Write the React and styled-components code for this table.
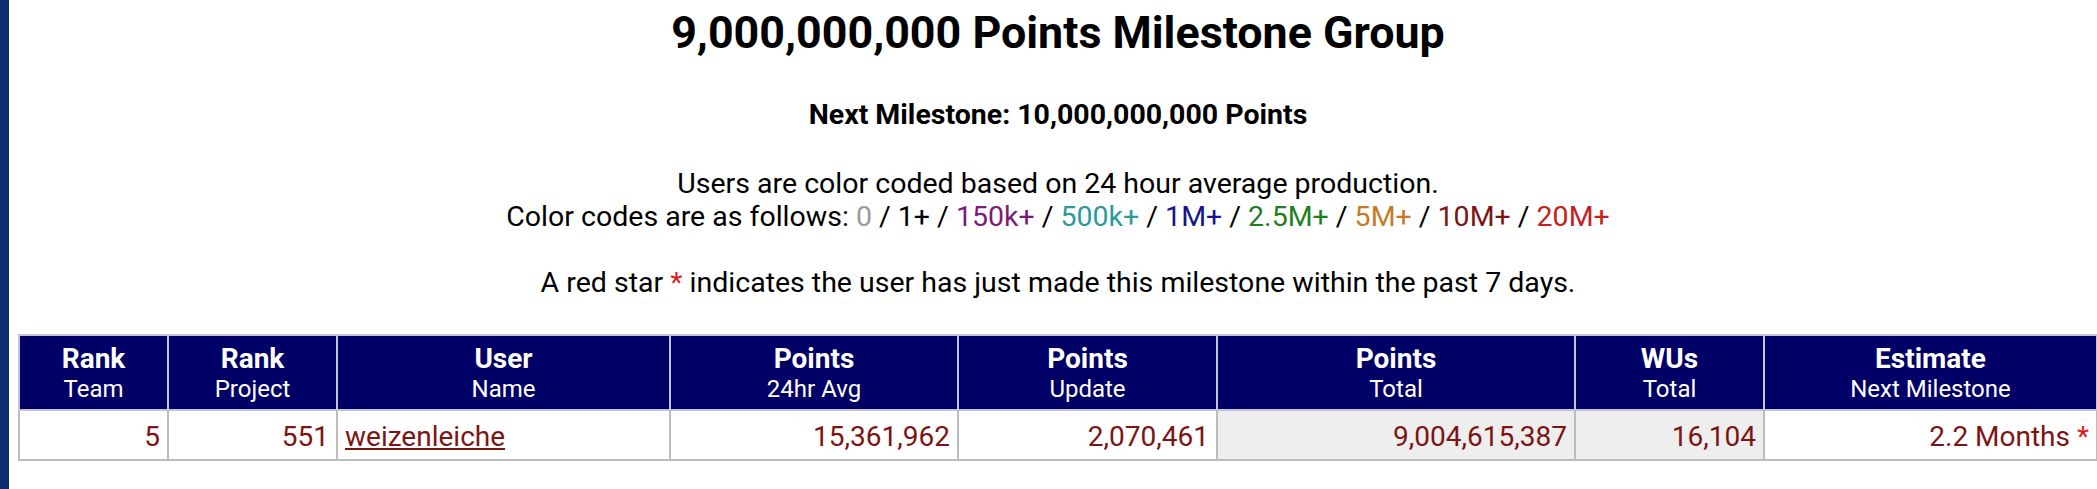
import React from "react";
import styled, { createGlobalStyle } from "styled-components";

const Global = createGlobalStyle`
  html, body { margin: 0; padding: 0; background: #ffffff; }
  body { font-family: Roboto, "Liberation Sans", Arial, sans-serif; color: #000; }
`;

const Page = styled.div`
  display: flex;
  min-height: 100vh;
`;

const SideBar = styled.div`
  width: 9px;
  flex: 0 0 9px;
  background: #0b2c6e;
`;

const Main = styled.main`
  flex: 1;
  padding: 0 1px 0 9px;
  text-align: center;
`;

const Title = styled.h1`
  margin: 7px 0 0;
  font-size: 44.8px;
  line-height: 52px;
  font-weight: 700;
`;

const SubTitle = styled.h3`
  margin: 39px 0 0;
  font-size: 28.5px;
  line-height: 33px;
  font-weight: 700;
`;

const Info = styled.p`
  margin: 36px 0 0;
  font-size: 28.5px;
  line-height: 33px;
`;

const Code = styled.span`
  color: ${(p) => p.$c};
`;

const Star = styled.span`
  color: #e01818;
`;

const Table = styled.table`
  margin-top: 35px;
  width: 100%;
  border-collapse: collapse;
  table-layout: fixed;
  border: 2px solid #c0c0cc;
`;

const Col = styled.col`
  width: ${(p) => p.$w}px;
`;

const Th = styled.th`
  background: #000066;
  color: #fff;
  border: 2px solid #c4c4d6;
  padding: 6px 4px 6px;
  font-weight: 400;
  text-align: center;
  vertical-align: middle;
`;

const HeadMain = styled.div`
  font-size: 28px;
  line-height: 33px;
  font-weight: 700;
`;

const HeadSub = styled.div`
  font-size: 24px;
  line-height: 28px;
`;

const Td = styled.td`
  border: 2px solid #bcbcbc;
  padding: 9px 7px 6px;
  font-size: 28px;
  line-height: 33px;
  color: #7d1414;
  text-align: ${(p) => (p.$left ? "left" : "right")};
  background: ${(p) => (p.$shade ? "#eeeeee" : "#ffffff")};
  white-space: nowrap;
`;

const UserLink = styled.a`
  color: #7d1414;
  text-decoration: underline;
`;

const codes = [
  ["0", "#9a9a9a"],
  ["1+", "#000000"],
  ["150k+", "#7b1a7b"],
  ["500k+", "#2b9a9a"],
  ["1M+", "#14148c"],
  ["2.5M+", "#1f7f1f"],
  ["5M+", "#c67a26"],
  ["10M+", "#7d1414"],
  ["20M+", "#c42020"],
];

const headers = [
  ["Rank", "Team", 149],
  ["Rank", "Project", 169],
  ["User", "Name", 333],
  ["Points", "24hr Avg", 288],
  ["Points", "Update", 259],
  ["Points", "Total", 358],
  ["WUs", "Total", 189],
  ["Estimate", "Next Milestone", 333],
];

export default function App() {
  return (
    <>
      <Global />
      <Page>
        <SideBar />
        <Main>
          <Title>9,000,000,000 Points Milestone Group</Title>
          <SubTitle>Next Milestone: 10,000,000,000 Points</SubTitle>
          <Info>
            Users are color coded based on 24 hour average production.
            <br />
            Color codes are as follows:{" "}
            {codes.map(([label, c], i) => (
              <React.Fragment key={label}>
                <Code $c={c}>{label}</Code>
                {i < codes.length - 1 ? " / " : ""}
              </React.Fragment>
            ))}
            <br />
            <br />
            A red star <Star>*</Star> indicates the user has just made this
            milestone within the past 7 days.
          </Info>
          <Table>
            <colgroup>
              {headers.map(([, , w], i) => (
                <Col key={i} $w={w} />
              ))}
            </colgroup>
            <thead>
              <tr>
                {headers.map(([a, b], i) => (
                  <Th key={i}>
                    <HeadMain>{a}</HeadMain>
                    <HeadSub>{b}</HeadSub>
                  </Th>
                ))}
              </tr>
            </thead>
            <tbody>
              <tr>
                <Td>5</Td>
                <Td>551</Td>
                <Td $left>
                  <UserLink href="#">weizenleiche</UserLink>
                </Td>
                <Td>15,361,962</Td>
                <Td>2,070,461</Td>
                <Td $shade>9,004,615,387</Td>
                <Td $shade>16,104</Td>
                <Td>
                  2.2 Months <Star>*</Star>
                </Td>
              </tr>
            </tbody>
          </Table>
        </Main>
      </Page>
    </>
  );
}
